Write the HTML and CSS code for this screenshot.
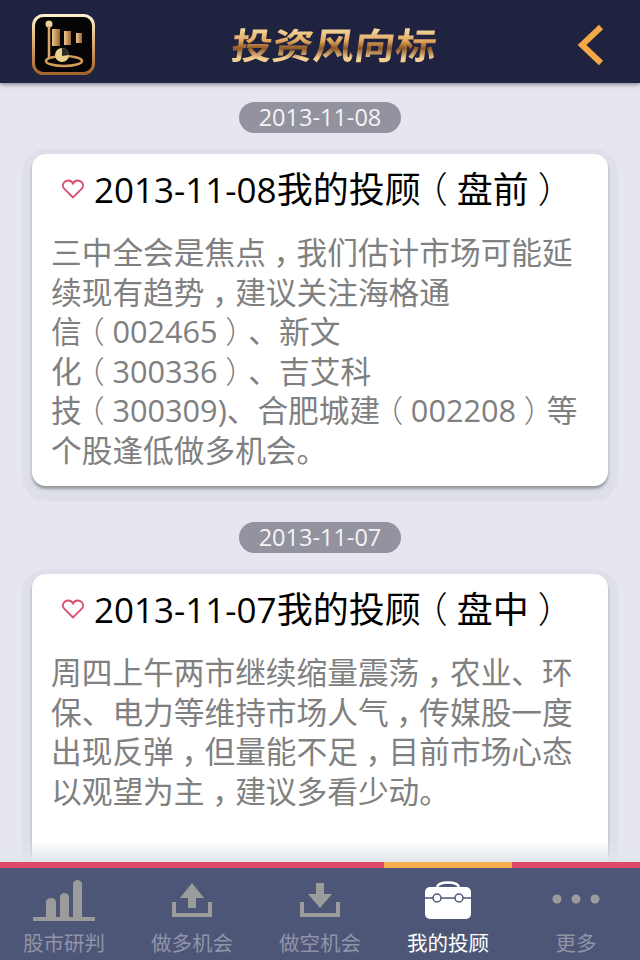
FILE: index.html
```html
<!DOCTYPE html>
<html lang="zh-CN">
<head>
    <meta charset="UTF-8">
    <meta name="viewport" content="width=device-width, initial-scale=1.0">
    <title>投资风向标</title>
    <link rel="stylesheet" href="styles.css">
</head>
<body>
    <header class="topbar">
        <svg class="logo" width="66" height="64" viewBox="0 0 66 64">
            <defs>
                <linearGradient id="gold" x1="0" y1="0" x2="0" y2="1">
                    <stop offset="0" stop-color="#fff1cf"/>
                    <stop offset="0.5" stop-color="#d9a768"/>
                    <stop offset="1" stop-color="#a4642c"/>
                </linearGradient>
                <linearGradient id="bar" x1="0" y1="0" x2="1" y2="0">
                    <stop offset="0" stop-color="#f0c68c"/>
                    <stop offset="1" stop-color="#9b6330"/>
                </linearGradient>
            </defs>
            <rect x="2.500" y="2.500" width="60" height="58" rx="10" fill="#050505" stroke="url(#gold)" stroke-width="3"/>
            <circle cx="18" cy="11" r="3.500" fill="#edd2a0"/>
            <path d="M18 13V46" stroke="#d9a768" stroke-width="2.500"/>
            <rect x="21" y="16" width="8" height="17" fill="url(#bar)"/>
            <rect x="33" y="18" width="7" height="14" fill="url(#bar)"/>
            <rect x="45" y="20" width="6" height="10" fill="url(#bar)"/>
            <ellipse cx="33" cy="48" rx="18" ry="5" fill="none" stroke="#d39a5a" stroke-width="2.500"/>
            <circle cx="31" cy="42" r="7" fill="#eed28c"/>
            <path d="M31 35a7 7 0 0 1 7 7l-7 1z" fill="#2a2a2a"/>
        </svg>
        <h1 class="brand">投资风向标</h1>
        <svg class="back" width="30" height="44" viewBox="0 0 30 44">
            <path d="M25 4L6 22L25 40" fill="none" stroke="#f4a848" stroke-width="6"/>
        </svg>
    </header>

    <main class="feed">
        <section class="entry">
            <div class="date"><span>2013-11-08</span></div>
            <article class="card">
                <h2 class="card-title">
                    <svg class="heart" width="24" height="20" viewBox="0 0 24 20">
                        <path d="M12 18.500L3 9.500C0 5.500 3.500 1.500 7.500 1.500C9.500 1.500 11 2.500 12 4.500C13 2.500 14.500 1.500 16.500 1.500C20.500 1.500 24 5.500 21 9.500z" fill="none" stroke="#d8506e" stroke-width="1.800"/>
                    </svg>
                    <span>2013-11-08<span class="cjk">我的投顾<span class="pn">（</span>盘前<span class="pn">）</span></span></span>
                </h2>
                <p class="card-text">三中全会是焦点<span class="cm">，</span>我们估计市场可能延<br>续现有趋势<span class="cm">，</span>建议关注海格通<br>信<span class="pn">（</span>002465<span class="pn">）</span>、新文<br>化<span class="pn">（</span>300336<span class="pn">）</span>、吉艾科<br>技<span class="pn">（</span>300309)、合肥城建<span class="pn">（</span>002208<span class="pn">）</span>等<br>个股逢低做多机会。</p>
            </article>
        </section>

        <section class="entry">
            <div class="date"><span>2013-11-07</span></div>
            <article class="card">
                <h2 class="card-title">
                    <svg class="heart" width="24" height="20" viewBox="0 0 24 20">
                        <path d="M12 18.500L3 9.500C0 5.500 3.500 1.500 7.500 1.500C9.500 1.500 11 2.500 12 4.500C13 2.500 14.500 1.500 16.500 1.500C20.500 1.500 24 5.500 21 9.500z" fill="none" stroke="#d8506e" stroke-width="1.800"/>
                    </svg>
                    <span>2013-11-07<span class="cjk">我的投顾<span class="pn">（</span>盘中<span class="pn">）</span></span></span>
                </h2>
                <p class="card-text">周四上午两市继续缩量震荡<span class="cm">，</span>农业、环<br>保、电力等维持市场人气<span class="cm">，</span>传媒股一度<br>出现反弹<span class="cm">，</span>但量能不足<span class="cm">，</span>目前市场心态<br>以观望为主<span class="cm">，</span>建议多看少动。</p>
            </article>
        </section>

        <div class="fade"></div>
    </main>

    <nav class="tabs">
        <a class="tab">
            <svg width="128" height="56" viewBox="0 0 128 56" fill="#9b9b9b">
                <path d="M33 45h62v4H33z"/>
                <path d="M46 30a5 4 0 0 1 10 0V45H46z"/>
                <path d="M60 25a4.500 4 0 0 1 9 0V45H60z"/>
                <path d="M73 12a4.500 4 0 0 1 9 0V45H73z"/>
            </svg>
            <span>股市研判</span>
        </a>
        <a class="tab">
            <svg width="128" height="56" viewBox="0 0 128 56" fill="#9b9b9b">
                <path d="M52 26L64 11L76 26H68V36H60V26z"/>
                <path d="M44 30h4v11h32V30h4V45H44z"/>
            </svg>
            <span>做多机会</span>
        </a>
        <a class="tab">
            <svg width="128" height="56" viewBox="0 0 128 56" fill="#9b9b9b">
                <path d="M60 11h8V22H76L64 36L52 22H60z"/>
                <path d="M44 30h4v11h32V30h4V45H44z"/>
            </svg>
            <span>做空机会</span>
        </a>
        <a class="tab tab-active">
            <svg width="128" height="56" viewBox="0 0 128 56">
                <path d="M53 15C55 9 73 9 75 15" fill="none" stroke="#fff" stroke-width="2.500"/>
                <rect x="41" y="15" width="46" height="32" rx="5" fill="#fff"/>
                <path d="M41 26H87" stroke="#4e5677" stroke-width="1.500"/>
                <circle cx="53" cy="26" r="4" fill="#fff" stroke="#4e5677" stroke-width="1.500"/>
                <circle cx="75" cy="26" r="4" fill="#fff" stroke="#4e5677" stroke-width="1.500"/>
            </svg>
            <span>我的投顾</span>
        </a>
        <a class="tab">
            <svg width="128" height="56" viewBox="0 0 128 56" fill="#9b9b9b">
                <circle cx="45" cy="27" r="4.500"/>
                <circle cx="64" cy="27" r="4.500"/>
                <circle cx="83" cy="27" r="4.500"/>
            </svg>
            <span>更多</span>
        </a>
    </nav>
</body>
</html>
```

FILE: styles.css
```css
* { box-sizing: border-box; }
body { margin: 0; height: 960px; display: flex; flex-direction: column; overflow: hidden; background: #e6e6f0; font-family: "Open Sans", "Noto Sans CJK SC", sans-serif; text-spacing-trim: space-all; }

.topbar { height: 83px; flex: none; display: flex; align-items: flex-start; justify-content: space-between; padding: 0 34px 0 31px; background: #20233f; box-shadow: 0 2px 4px rgba(60, 65, 80, 0.5); position: relative; z-index: 2; }
.logo { display: block; margin-top: 13px; }
.brand { margin: 18px 0 0 -4px; font-size: 41px; line-height: 50px; font-weight: 700; font-family: "Noto Sans CJK SC", sans-serif; color: transparent; background: linear-gradient(180deg, #f8dfa8 15%, #e2a75f 45%, #8f5826 62%, #f3cf94 85%); -webkit-background-clip: text; background-clip: text; transform: skewX(-8deg) scaleY(0.88); }
.back { display: block; margin-top: 23px; }

.feed { flex: 1; min-height: 0; overflow: hidden; position: relative; padding-top: 19px; }
.entry { margin-bottom: 36px; }
.date { display: flex; justify-content: center; margin-bottom: 21px; }
.date span { width: 162px; height: 31px; border-radius: 16px; background: #92939f; color: #f4f4f6; font-size: 23.5px; line-height: 31px; text-align: center; }

.card { margin: 0 32px; min-height: 332px; padding: 12px 0 15.5px; background: #fff; border-radius: 14px; box-shadow: 0 3px 3px rgba(90, 100, 100, 0.55), 0 5px 0 10px #dedfe8; }
.card-title { margin: 0 0 19px; padding-left: 29px; display: flex; align-items: center; gap: 9px; height: 48px; font-size: 35px; line-height: 48px; font-weight: 400; color: #000; white-space: nowrap; }
.cjk { font-size: 36px; }
.heart { flex: none; margin-top: -2px; }
.card-text { margin: 0; padding-left: 19px; font-size: 30.7px; line-height: 39.5px; color: #808080; white-space: nowrap; }
/* source font centres brackets and commas in the cell: half-width glyph + padding */
.pn, .cm { font-feature-settings: "halt"; padding: 0 0.25em; }
.pn { font-weight: 300; }

.fade { position: absolute; left: 0; right: 0; bottom: 0; height: 22px; background: linear-gradient(180deg, rgba(226, 230, 236, 0), #e2e6ec); }

.tabs { height: 98px; flex: none; display: flex; background: #4e5677; position: relative; z-index: 2; }
.tab { width: 128px; padding-top: 4px; border-top: 6px solid #e0486a; text-align: center; color: #8f94a8; font-size: 20.5px; line-height: 26px; }
.tab svg { display: block; margin-bottom: 2px; }
.tab-active { border-top-color: #f6ae4e; color: #fff; }
```
